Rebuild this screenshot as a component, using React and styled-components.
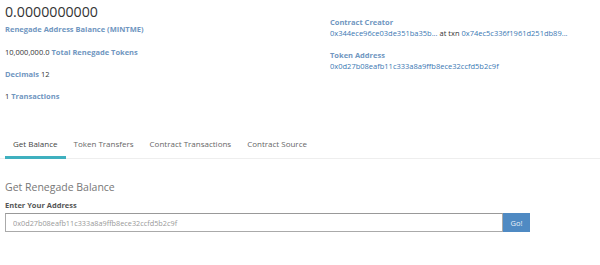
import styled, { createGlobalStyle } from "styled-components"

const Global = createGlobalStyle`
    body {
        margin: 0;
        background: #fff;
        font-family: "Open Sans", "Liberation Sans", sans-serif;
        color: #555;
    }
`

export default function App() {
    return (
        <Page>
            <Global />
            <Summary>
                <Column>
                    <Big>0.0000000000</Big>
                    <Caption>Renegade Address Balance (MINTME)</Caption>
                    <Line $gap={14}>
                        10,000,000.0 <Key>Total Renegade Tokens</Key>
                    </Line>
                    <Line $gap={14}>
                        <Key>Decimals</Key> 12
                    </Line>
                    <Line $gap={14}>
                        1 <Key>Transactions</Key>
                    </Line>
                </Column>
                <Side>
                    <Caption>Contract Creator</Caption>
                    <Value>
                        <Link>0x344ece96ce03de351ba35b...</Link>
                        <Plain> at txn </Plain>
                        <Link>0x74ec5c336f1961d251db89...</Link>
                    </Value>
                    <Caption $top={11}>Token Address</Caption>
                    <Value>
                        <Link>0x0d27b08eafb11c333a8a9ffb8ece32ccfd5b2c9f</Link>
                    </Value>
                </Side>
            </Summary>
            <Tabs>
                <Tab $active>Get Balance</Tab>
                <Tab>Token Transfers</Tab>
                <Tab>Contract Transactions</Tab>
                <Tab>Contract Source</Tab>
            </Tabs>
            <Panel>
                <Heading>Get Renegade Balance</Heading>
                <FieldLabel>Enter Your Address</FieldLabel>
                <Form>
                    <Input defaultValue="0x0d27b08eafb11c333a8a9ffb8ece32ccfd5b2c9f" />
                    <Go>Go!</Go>
                </Form>
            </Panel>
        </Page>
    )
}

const Page = styled.div`
    width: 600px;
    height: 265px;
    overflow: hidden;
`

const Summary = styled.div`
    display: flex;
    padding: 0 5px;
    height: 134px;
`

const Column = styled.div`
    width: 325px;
`

const Big = styled.div`
    font-size: 14.2px;
    line-height: 16px;
    margin-top: 4px;
    color: #333;
`

const Caption = styled.div`
    font-weight: 700;
    font-size: 7.5px;
    line-height: 10px;
    color: #7096bf;
    margin-top: ${(p) => p.$top || 4}px;
`

const Key = styled.span`
    font-weight: 700;
    color: #7096bf;
`

const Line = styled.div`
    margin-top: ${(p) => p.$gap}px;
    font-size: 7.5px;
    line-height: 8px;
    color: #333;
`

const Side = styled.div`
    display: flex;
    flex-direction: column;
    align-items: flex-start;
    padding-top: 13px;
`

const Value = styled.div`
    font-size: 7.5px;
    line-height: 12px;
    white-space: nowrap;
`

const Link = styled.span`
    color: #3a78b3;
`

const Plain = styled.span`
    color: #333;
`

const Tabs = styled.div`
    display: flex;
    padding-left: 5px;
    border-bottom: 1px solid #eee;
`

const Tab = styled.div`
    font-size: 8px;
    line-height: 10px;
    color: ${(p) => (p.$active ? "#444" : "#666")};
    padding: 5px 8px 7px;
    border-bottom: 3px solid ${(p) => (p.$active ? "#3fb0bf" : "transparent")};
    margin-bottom: -1px;
`

const Panel = styled.div`
    padding: 22px 5px 0;
`

const Heading = styled.div`
    font-size: 10.5px;
    color: #777;
    line-height: 12px;
`

const FieldLabel = styled.div`
    margin-top: 7px;
    font-size: 7.5px;
    font-weight: 700;
    color: #555;
    line-height: 10px;
`

const Form = styled.div`
    display: flex;
    margin-top: 3px;
`

const Input = styled.input`
    box-sizing: border-box;
    flex: 0 0 498px;
    height: 19px;
    border: 1px solid #aaa;
    border-top-color: #999;
    padding: 0 7px;
    font-family: inherit;
    font-size: 7.3px;
    color: #999;
    outline: none;
`

const Go = styled.button`
    box-sizing: border-box;
    flex: 0 0 27px;
    height: 19px;
    border: none;
    background: #4f8ac3;
    color: #e8f0f8;
    font-family: inherit;
    font-size: 7.5px;
    padding: 0;
`
